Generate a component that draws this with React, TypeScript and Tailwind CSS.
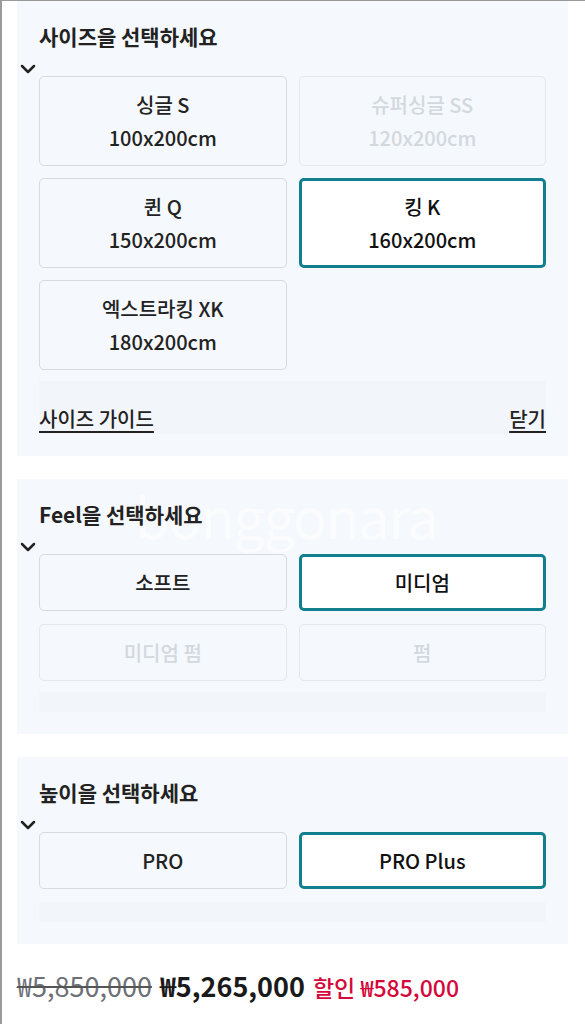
import * as React from "react"
import { ChevronDown } from "lucide-react"

type Opt = { name: string; size?: string; disabled?: boolean; selected?: boolean }

const sizes: Opt[] = [
  { name: "싱글 S", size: "100x200cm" },
  { name: "슈퍼싱글 SS", size: "120x200cm", disabled: true },
  { name: "퀸 Q", size: "150x200cm" },
  { name: "킹 K", size: "160x200cm", selected: true },
  { name: "엑스트라킹 XK", size: "180x200cm" },
]

const feels: Opt[] = [
  { name: "소프트" },
  { name: "미디엄", selected: true },
  { name: "미디엄 펌", disabled: true },
  { name: "펌", disabled: true },
]

const heights: Opt[] = [{ name: "PRO" }, { name: "PRO Plus", selected: true }]

function OptionButton({ opt, tall }: { opt: Opt; tall?: boolean }) {
  const base = tall ? "h-[90px]" : "h-[57px]"
  const tone = opt.selected
    ? "bg-white border-[3px] border-[#127f8e] text-[#111]"
    : opt.disabled
      ? "bg-[#f5f8fc] border border-[#e4e7ec] text-[#d3d8de]"
      : "bg-[#f5f8fc] border border-[#d7dbe1] text-[#222]"
  return (
    <button className={`${base} ${tone} rounded-[5px] flex flex-col items-center justify-center text-[20px] font-medium leading-[33px]`}>
      <span>{opt.name}</span>
      {opt.size && <span>{opt.size}</span>}
    </button>
  )
}

function Section({
  title,
  options,
  tall,
  rowGap,
  children,
  watermark,
}: {
  title: string
  options: Opt[]
  tall?: boolean
  rowGap: string
  children?: React.ReactNode
  watermark?: boolean
}) {
  return (
    <section className="relative bg-[#f5f8fc] px-[22px] pt-[21px] pb-[22px]">
      {watermark && (
        <div className="pointer-events-none absolute left-[118px] top-[-6px] text-[56px] font-normal tracking-tight text-white/50">
          bonggonara
        </div>
      )}
      <h2 className="relative h-[28px] text-[21px] leading-[28px] font-semibold text-[#222]">{title}</h2>
      <div className="relative mt-[26px]">
        <ChevronDown className="absolute left-[-23px] top-[-19px] h-6 w-6 text-[#222]" strokeWidth={2.5} />
        <div className={`grid grid-cols-2 gap-x-3 ${rowGap}`}>
          {options.map((o) => (
            <OptionButton key={o.name} opt={o} tall={tall} />
          ))}
        </div>
      </div>
      {children}
    </section>
  )
}

export default function App() {
  return (
    <div className="min-h-[1024px] border-l-2 border-t border-[#9a9a9a] bg-white pl-[15px] pr-[17px] font-['Noto_Sans_CJK_KR','Noto_Sans',sans-serif]">
      <Section title="사이즈을 선택하세요" options={sizes} tall rowGap="gap-y-3">
        <div className="mt-[11px] flex h-[53px] items-end justify-between bg-[#f2f5f9] pb-[2px] text-[20px] font-medium leading-[26px] text-[#222]">
          <a className="underline underline-offset-4">사이즈 가이드</a>
          <a className="underline underline-offset-4">닫기</a>
        </div>
      </Section>

      <div className="mt-[23px]">
        <Section title="Feel을 선택하세요" options={feels} rowGap="gap-y-[13px]" watermark>
          <div className="mt-[11px] h-[20px] bg-[#f2f5f9]" />
        </Section>
      </div>

      <div className="mt-[23px]">
        <Section title="높이을 선택하세요" options={heights} rowGap="gap-y-3">
          <div className="mt-[13px] h-[20px] bg-[#f2f5f9]" />
        </Section>
      </div>

      <div className="mt-[24px] flex items-baseline text-[27px] leading-[36px]">
        <span className="text-[#6d7177] line-through decoration-[#555] decoration-2">₩5,850,000</span>
        <span className="ml-[8px] font-bold text-[#1a1a1a]">₩5,265,000</span>
        <span className="ml-[8px] text-[23px] font-medium text-[#d4083b]">할인 ₩585,000</span>
      </div>
    </div>
  )
}
